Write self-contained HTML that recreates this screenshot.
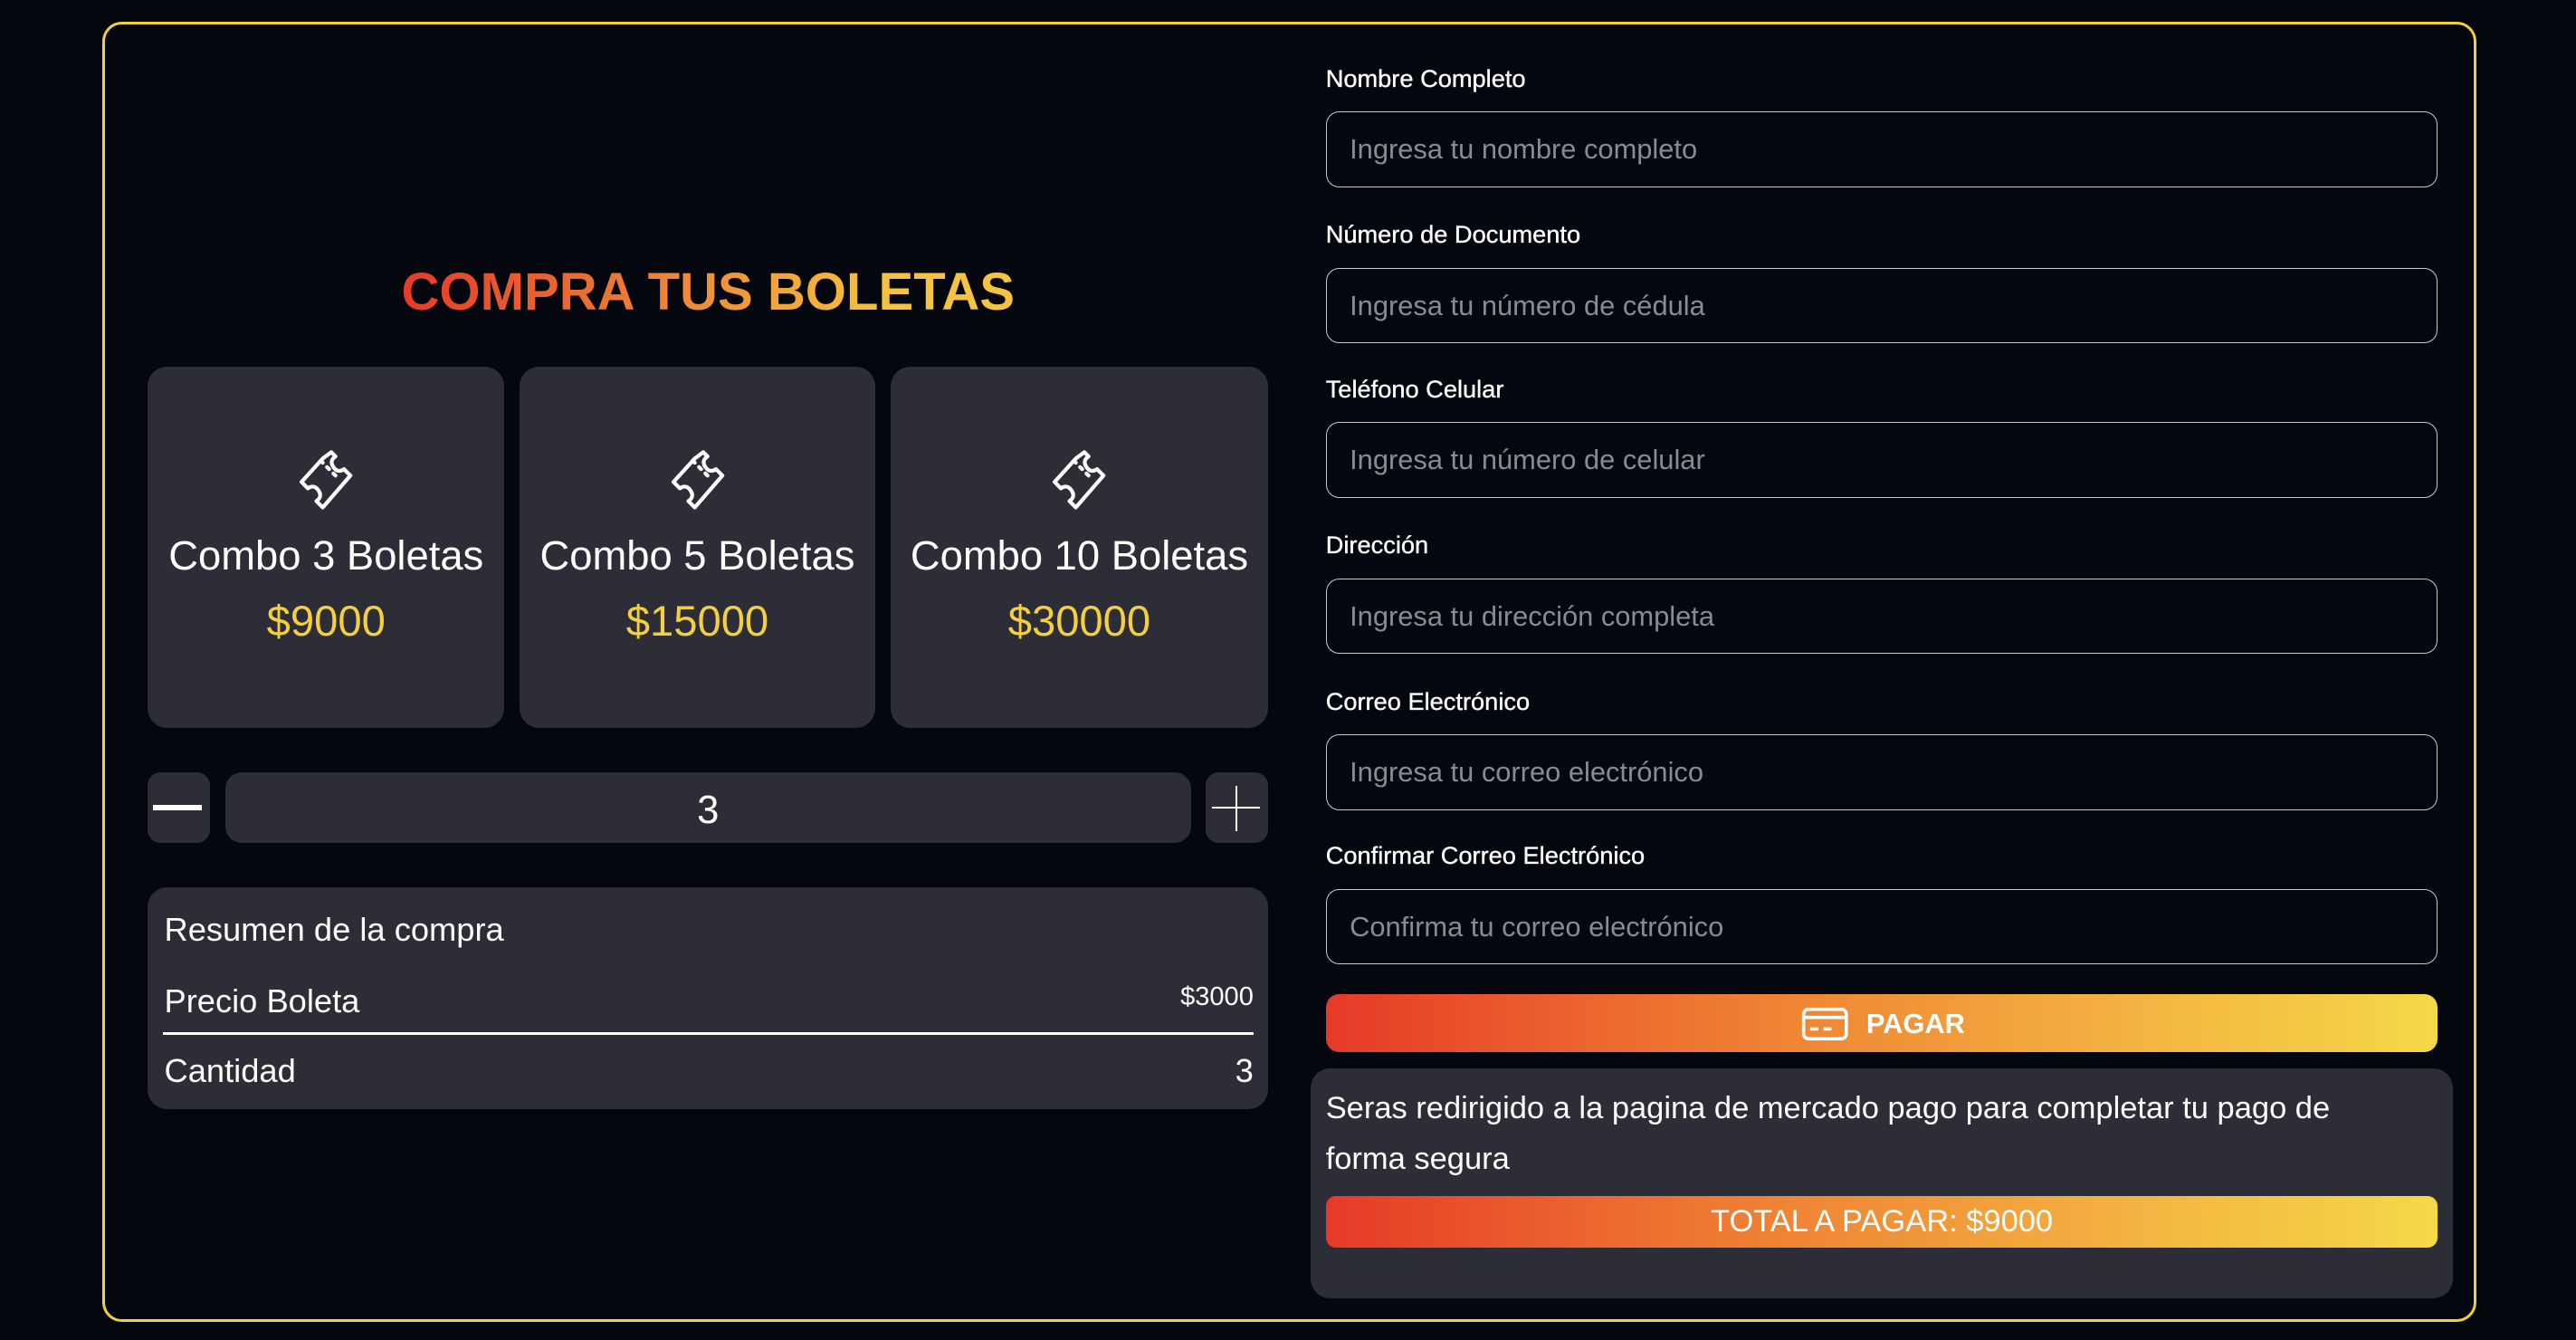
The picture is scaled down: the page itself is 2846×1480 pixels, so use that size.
<!DOCTYPE html>
<html><head><meta charset="utf-8"><style>
html,body{margin:0;padding:0;background:#05070f;width:2846px;height:1480px;overflow:hidden}
#w{position:absolute;left:0;top:0;width:1568px;height:815px;zoom:1.815;font-family:"Liberation Sans",sans-serif;color:#fff}
.a{position:absolute}
.card{position:absolute;background:#2d2d37;border-radius:12px}
.grad{background:linear-gradient(90deg,#e63a27,#ee7a32 35%,#f3b040 70%,#f5d847)}
.lbl{position:absolute;left:807px;font-size:15px;-webkit-text-stroke:0.2px #fff}
.inp{position:absolute;left:807px;width:677px;height:46px;border:1px solid #c8c8cc;border-radius:8px;box-sizing:border-box;padding-left:14px;line-height:45px;font-size:17px;color:#8a8a92}
.ct{position:absolute;width:100%;text-align:center}
</style></head><body><div id="w">
<div class="a" style="left:62px;top:13px;width:1442px;height:788px;border:2px solid #f2cf3c;border-radius:12px"></div>
<div class="a" style="left:90px;width:682px;top:159px;text-align:center;font-size:32px;font-weight:bold;"><span style="background:linear-gradient(90deg,#e63a27,#f5c33f 80%);-webkit-background-clip:text;color:transparent">COMPRA TUS BOLETAS</span></div>

<svg width="0" height="0" style="position:absolute"><defs><g id="tk"><path d="M13 3 L3 14 L6 17 Q9 15 11 18 Q13 21 10 23 L13 26 L26 11 L23 8 Q20 10 18 7 Q16 4 19 2 L17 0 Z" fill="none" stroke="#fff" stroke-width="1.8" stroke-linejoin="round" transform="translate(3,4)"/><path d="M15 10 L16 11 M18 13 L19 14 M21 16 L22 17" stroke="#fff" stroke-width="1.8" stroke-linecap="round" transform="translate(0,-2)"/></g></defs></svg>

<div class="card" style="left:90px;top:223px;width:217px;height:220px">
<svg class="a" style="left:86px;top:47px" width="44" height="44" viewBox="0 0 34 34"><use href="#tk"/></svg>
<div class="ct" style="top:101px;font-size:25px">Combo 3 Boletas</div>
<div class="ct" style="top:140px;font-size:26px;color:#f4d03f">$9000</div></div>
<div class="card" style="left:316px;top:223px;width:217px;height:220px">
<svg class="a" style="left:86px;top:47px" width="44" height="44" viewBox="0 0 34 34"><use href="#tk"/></svg>
<div class="ct" style="top:101px;font-size:25px">Combo 5 Boletas</div>
<div class="ct" style="top:140px;font-size:26px;color:#f4d03f">$15000</div></div>
<div class="card" style="left:542px;top:223px;width:230px;height:220px">
<svg class="a" style="left:92px;top:47px" width="44" height="44" viewBox="0 0 34 34"><use href="#tk"/></svg>
<div class="ct" style="top:101px;font-size:25px">Combo 10 Boletas</div>
<div class="ct" style="top:140px;font-size:26px;color:#f4d03f">$30000</div></div>

<div class="card" style="left:90px;top:470px;width:38px;height:43px;border-radius:8px"><div class="a" style="left:3px;top:20px;width:30px;height:3px;background:#fff"></div></div>
<div class="card" style="left:137px;top:470px;width:588px;height:43px;border-radius:10px"><div class="ct" style="top:10px;font-size:24px">3</div></div>
<div class="card" style="left:734px;top:470px;width:38px;height:43px;border-radius:8px"><div class="a" style="left:4px;top:21px;width:29px;height:1px;background:#fff"></div><div class="a" style="left:18px;top:8px;width:1px;height:28px;background:#fff"></div></div>

<div class="card" style="left:90px;top:540px;width:682px;height:135px">
<div class="a" style="left:10px;top:14px;font-size:20px">Resumen de la compra</div>
<div class="a" style="left:10px;top:58px;font-size:20px">Precio Boleta</div>
<div class="a" style="right:9px;top:58px;font-size:16px">$3000</div>
<div class="a" style="left:9px;right:9px;top:88px;height:2px;background:#fff"></div>
<div class="a" style="left:10px;top:100px;font-size:20px">Cantidad</div>
<div class="a" style="right:9px;top:100px;font-size:20px">3</div>
</div>

<div class="lbl" style="top:39px">Nombre Completo</div>
<div class="inp" style="top:68px">Ingresa tu nombre completo</div>
<div class="lbl" style="top:134px">Número de Documento</div>
<div class="inp" style="top:163px">Ingresa tu número de cédula</div>
<div class="lbl" style="top:228px">Teléfono Celular</div>
<div class="inp" style="top:257px">Ingresa tu número de celular</div>
<div class="lbl" style="top:323px">Dirección</div>
<div class="inp" style="top:352px">Ingresa tu dirección completa</div>
<div class="lbl" style="top:418px">Correo Electrónico</div>
<div class="inp" style="top:447px">Ingresa tu correo electrónico</div>
<div class="lbl" style="top:512px">Confirmar Correo Electrónico</div>
<div class="inp" style="top:541px">Confirma tu correo electrónico</div>

<div class="a grad" style="left:807px;top:605px;width:677px;height:35px;border-radius:8px">
<svg class="a" style="left:289px;top:7px" width="30" height="22" viewBox="0 0 30 22"><rect x="2" y="2" width="26" height="18" rx="3" fill="none" stroke="#fff" stroke-width="2"/><path d="M2 7H28M6 14H11M14 14H19" stroke="#fff" stroke-width="2"/></svg>
<div class="a" style="left:329px;top:8px;font-size:17px;font-weight:bold">PAGAR</div></div>

<div class="card" style="left:798px;top:650px;width:695px;height:140px">
<div class="a" style="left:9px;top:9px;width:650px;font-size:19px;line-height:31px">Seras redirigido a la pagina de mercado pago para completar tu pago de forma segura</div>
<div class="a grad" style="left:9px;top:78px;width:677px;height:31px;border-radius:6px"><div class="ct" style="top:5px;font-size:19px">TOTAL A PAGAR: $9000</div></div>
</div>
</div></body></html>
